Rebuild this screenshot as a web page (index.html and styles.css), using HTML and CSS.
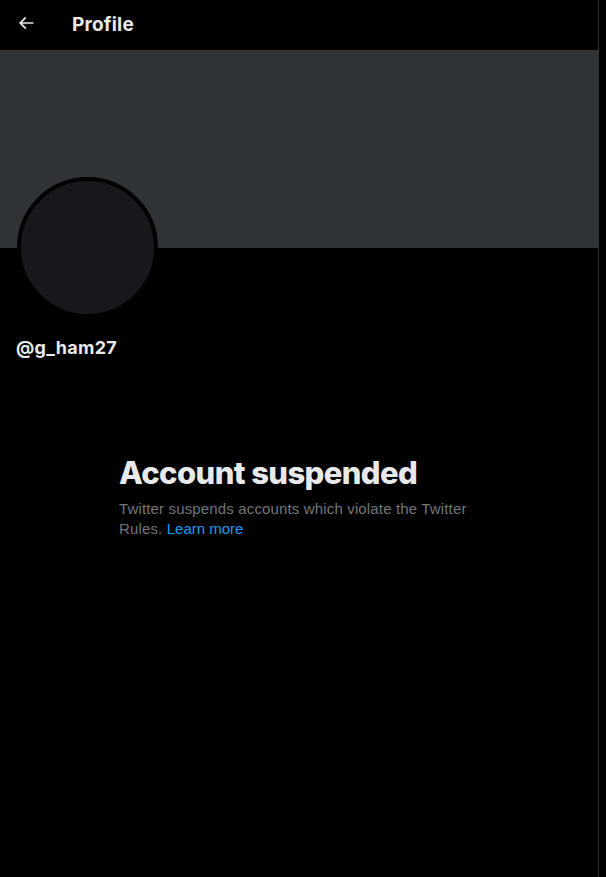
FILE: index.html
```html
<!DOCTYPE html>
<html>
<head>
<meta charset="utf-8">
<link rel="stylesheet" href="styles.css">
</head>
<body>
<div class="page">
  <main class="column">
    <header class="topbar">
      <div class="back">
        <svg viewBox="0 0 24 24" width="20" height="20"><path fill="#e7e9ea" d="M7.414 13l5.043 5.04-1.414 1.42L3.586 12l7.457-7.46 1.414 1.42L7.414 11H21v2H7.414z"/></svg>
      </div>
      <h2 class="title">Profile</h2>
    </header>
    <div class="banner"></div>
    <div class="info">
      <div class="avatar-row">
        <div class="avatar"></div>
      </div>
      <div class="handle">@g_ham27</div>
    </div>
    <section class="empty">
      <h1 class="empty-title">Account suspended</h1>
      <p class="empty-text">Twitter suspends accounts which violate the Twitter Rules. <a class="link" href="#">Learn more</a></p>
    </section>
  </main>
</div>
</body>
</html>
```

FILE: styles.css
```css
html, body {
  margin: 0;
  padding: 0;
  background: #000;
}
body {
  font-family: "Liberation Sans", Arial, sans-serif;
  color: #e7e9ea;
}
.page {
  display: flex;
  min-height: 877px;
}
.column {
  width: 598px;
  border-right: 1px solid #2f3336;
  min-height: 877px;
}
.topbar {
  height: 50px;
  display: flex;
  align-items: center;
  padding: 0 16px;
  box-sizing: border-box;
}
.back {
  width: 20px;
  height: 20px;
  display: flex;
  align-items: center;
  margin-top: -4px;
}
.title {
  margin: 0 0 2px 36px;
  font-family: "Inter", "Liberation Sans", sans-serif;
  font-size: 19px;
  font-weight: 700;
  letter-spacing: 0.2px;
  color: #e7e9ea;
}
.banner {
  height: 198px;
  background: #2f3336;
}
.info {
  padding: 0 16px;
}
.avatar-row {
  height: 68px;
  position: relative;
}
.avatar {
  position: absolute;
  left: 1px;
  top: -71px;
  width: 133px;
  height: 133px;
  border-radius: 50%;
  background: #16181c;
  border: 4px solid #000;
}
.handle {
  margin-top: 21px;
  font-family: "Inter", "Liberation Sans", sans-serif;
  font-size: 18px;
  font-weight: 700;
  letter-spacing: 0.3px;
  color: #e7e9ea;
}
.empty {
  max-width: 360px;
  margin: 97px auto 0;
  padding: 0 20px;
}
.empty-title {
  margin: 0;
  font-family: "Inter", "Liberation Sans", sans-serif;
  font-size: 31px;
  font-weight: 800;
  line-height: 36px;
  color: #e7e9ea;
  letter-spacing: -0.6px;
}
.empty-text {
  margin: 8px 0 0;
  font-size: 15px;
  line-height: 20px;
  letter-spacing: 0.15px;
  color: #71767b;
}
.link {
  color: #1d9bf0;
  letter-spacing: 0;
  text-decoration: none;
}
```
